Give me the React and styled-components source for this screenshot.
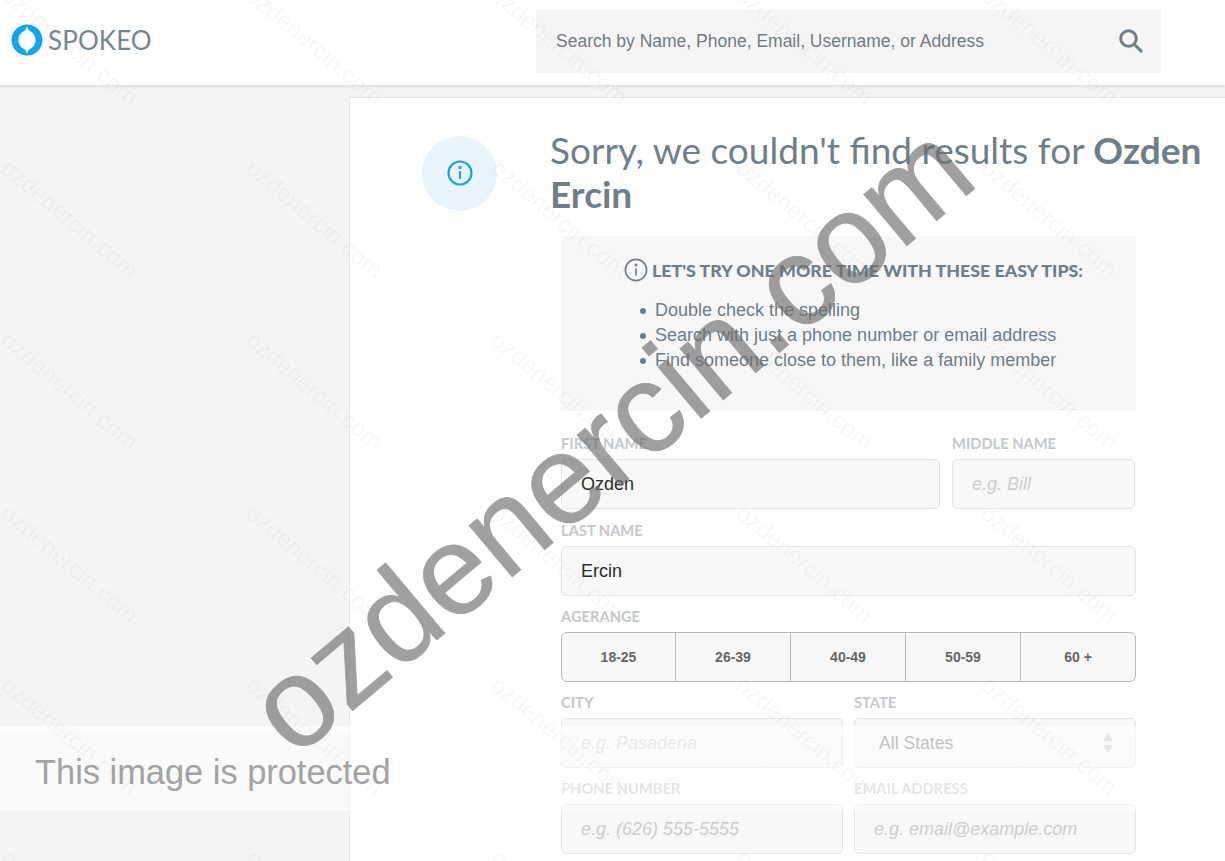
import React from 'react';
import styled, { createGlobalStyle } from 'styled-components';

const GlobalStyle = createGlobalStyle`
  html, body {
    margin: 0;
    padding: 0;
    height: 861px;
    overflow: hidden;
    background: #f4f4f4;
  }
  * { box-sizing: border-box; }
`;

const Shell = styled.div`
  position: relative;
  height: 861px;
  overflow: hidden;
  font-family: 'Liberation Sans', Arial, sans-serif;
`;

const Header = styled.header`
  display: grid;
  grid-template-columns: 536px 625px;
  align-items: start;
  height: 85px;
  padding-top: 10px;
  background: #fff;
  box-shadow: 0 1px 4px rgba(0, 0, 0, 0.12);
`;

const Logo = styled.div`
  display: flex;
  align-items: center;
  gap: 5px;
  height: 60px;
  padding-left: 11px;
`;

const LogoText = styled.span`
  font-family: Lato, sans-serif;
  font-size: 26px;
  letter-spacing: 0.1px;
  color: #76868f;
`;

const SearchBar = styled.div`
  display: flex;
  align-items: center;
  justify-content: space-between;
  height: 63px;
  padding: 0 18px 2px 20px;
  background: #f5f5f5;
`;

const SearchInput = styled.input`
  flex: 1;
  margin-top: 1px;
  border: 0;
  outline: 0;
  padding: 0;
  background: transparent;
  font: 17.5px 'Liberation Sans', Arial, sans-serif;
  &::placeholder { color: #6f7c84; opacity: 1; }
`;

const Body = styled.div`
  display: grid;
  grid-template-columns: 349px 1fr;
  padding-top: 12px;
`;

const Panel = styled.main`
  height: 780px;
  padding: 38px 0 0 72px;
  background: #fff;
  border-top: 1px solid #e6e6e6;
  border-left: 1px solid #e6e6e6;
`;

const Intro = styled.div`
  display: flex;
  gap: 53px;
`;

const InfoBadge = styled.div`
  display: flex;
  flex: none;
  align-items: center;
  justify-content: center;
  width: 75px;
  height: 75px;
  padding-bottom: 1px;
  border-radius: 50%;
  background: #e9f4fc;
`;

const Heading = styled.h1`
  width: 672px;
  margin: -8px 0 0;
  font-family: Lato, sans-serif;
  font-size: 37px;
  font-weight: 400;
  line-height: 43.5px;
  color: #6d7f8a;
  b { font-weight: 700; }
`;

const Column = styled.div`
  width: 575px;
  margin: 0 0 0 139px;
`;

const Tips = styled.section`
  height: 175px;
  margin-top: 21px;
  padding-top: 22px;
  background: #f7f7f7;
`;

const TipsTitle = styled.h2`
  display: flex;
  align-items: center;
  gap: 4px;
  height: 24px;
  margin: 0 0 0 63px;
  font-family: Lato, sans-serif;
  font-size: 17.8px;
  font-weight: 900;
  white-space: nowrap;
  color: #6d7f8a;
`;

const TipsList = styled.ul`
  margin: 16px 0 0;
  padding: 0 0 0 79px;
  list-style: none;
  font-size: 18px;
  line-height: 25px;
  color: #6c7d88;
`;

const TipItem = styled.li`
  display: flex;
  align-items: center;
  gap: 9px;
  &::before {
    content: '';
    flex: none;
    width: 6px;
    height: 6px;
    border-radius: 50%;
    background: #6c7d88;
  }
`;

const Form = styled.form`
  display: grid;
  row-gap: 12px;
  margin-top: 24px;
`;

const Row = styled.div`
  display: grid;
  grid-template-columns: ${(p) => p.$cols || '1fr'};
  column-gap: ${(p) => p.$gap || '11px'};
  &:first-child { margin-bottom: 1px; }
`;

const Field = styled.div`
  position: relative;
  min-width: 0;
`;

const Label = styled.label`
  display: block;
  height: 16px;
  margin-bottom: 8px;
  font-family: Lato, sans-serif;
  font-size: 14.7px;
  font-weight: 700;
  line-height: 16px;
  white-space: nowrap;
  color: #c4c8cb;
`;

const TextInput = styled.input`
  display: block;
  width: 100%;
  height: 50px;
  padding: 0 19px;
  border: 1px solid #e4e4e4;
  border-radius: 5px;
  outline: 0;
  background: #f8f8f8;
  font: 18px 'Liberation Sans', Arial, sans-serif;
  color: #2b2b2b;
  &::placeholder {
    font-style: italic;
    color: #cdcdcd;
    opacity: 1;
  }
`;

const StateSelect = styled.select`
  display: block;
  width: 100%;
  height: 50px;
  padding: 0 24px;
  border: 1px solid #e4e4e4;
  border-radius: 5px;
  outline: 0;
  appearance: none;
  background: #f8f8f8;
  font: 17.6px 'Liberation Sans', Arial, sans-serif;
  color: #777;
`;

const SelectArrows = styled.svg`
  position: absolute;
  right: 23px;
  bottom: 15px;
  pointer-events: none;
`;

const Segments = styled.div`
  display: grid;
  grid-template-columns: 114px 115px 115px 115px 1fr;
  height: 50px;
  border: 1px solid #b9b9b9;
  border-radius: 6px;
  overflow: hidden;
  background: #f8f8f8;
`;

const Segment = styled.button`
  padding: 0;
  border: 0;
  border-right: 1px solid #b9b9b9;
  background: transparent;
  font: bold 14px 'Liberation Sans', Arial, sans-serif;
  color: #666;
  &:last-child { border-right: 0; }
`;

const ProtectedBand = styled.div`
  position: absolute;
  left: 0;
  right: 0;
  top: 726px;
  height: 85px;
  padding: 25px 0 0 35px;
  background: linear-gradient(rgba(255,255,255,.75) 0 7px, rgba(255,255,255,.55) 7px);
  font-size: 34.4px;
  line-height: 42px;
  color: #a3a3a3;
`;

const TileLayer = styled.div`
  position: absolute;
  left: -1px;
  top: -40px;
  display: grid;
  grid-template-columns: repeat(5, 245px);
  grid-auto-rows: 172.5px;
  pointer-events: none;
`;

const Tile = styled.span`
  display: block;
  width: 245px;
  font-size: 24px;
  line-height: 172.5px;
  white-space: nowrap;
  text-align: center;
  color: rgba(120, 120, 120, 0.06);
  transform: translateX(-52px) rotate(40deg);
`;

const BigMark = styled.div`
  position: absolute;
  left: 610px;
  top: 438px;
  transform: translate(-50%, -50%) rotate(-40deg);
  font-size: 127px;
  line-height: 1;
  white-space: nowrap;
  color: #6e6e6e;
  -webkit-text-stroke: 0.8px #6e6e6e;
  opacity: 0.65;
  pointer-events: none;
`;

const LogoMark = () => (
  <svg width="32" height="32" viewBox="0 0 32 32">
    <circle cx="16" cy="16" r="15.5" fill="#12a5ea" />
    <path d="M16 2.5 L18 6.5 C21.8 8 24.5 11.5 24.5 16 C24.5 20.5 21.8 24 18 25.5 L16 29.5 L14 25.5 C10.2 24 7.5 20.5 7.5 16 C7.5 11.5 10.2 8 14 6.5 Z" fill="#fff" />
  </svg>
);

const SearchIcon = () => (
  <svg width="24" height="24" viewBox="0 0 24 24" fill="none" stroke="#6f7f89" strokeWidth="3" strokeLinecap="round">
    <circle cx="9.5" cy="9.5" r="7.8" />
    <path d="M15.5 15.5l6.6 6.6" />
  </svg>
);

const InfoIcon = ({ size, color, strokeWidth }) => (
  <svg width={size} height={size} viewBox="0 0 24 24" fill="none" stroke={color} strokeWidth={strokeWidth}>
    <circle cx="12" cy="12" r="10.6" />
    <path d="M12 10.4v7" />
    <circle cx="12" cy="7" r="0.6" fill={color} />
  </svg>
);

const watermarkTiles = Array.from({ length: 30 }, (_, i) => i);
const ageRanges = ['18-25', '26-39', '40-49', '50-59', '60 +'];

export default function App() {
  return (
    <Shell>
      <GlobalStyle />
      <Header>
        <Logo>
          <LogoMark />
          <LogoText>SPOKEO</LogoText>
        </Logo>
        <SearchBar>
          <SearchInput readOnly placeholder="Search by Name, Phone, Email, Username, or Address" />
          <SearchIcon />
        </SearchBar>
      </Header>
      <Body>
        <div />
        <Panel>
          <Intro>
            <InfoBadge>
              <InfoIcon size={26} color="#1ba6d8" strokeWidth={2} />
            </InfoBadge>
            <Heading>
              Sorry, we couldn't find results for <b>Ozden Ercin</b>
            </Heading>
          </Intro>
          <Column>
            <Tips>
              <TipsTitle>
                <InfoIcon size={24} color="#6d7f8a" strokeWidth={1.7} />
                LET'S TRY ONE MORE TIME WITH THESE EASY TIPS:
              </TipsTitle>
              <TipsList>
                <TipItem>Double check the spelling</TipItem>
                <TipItem>Search with just a phone number or email address</TipItem>
                <TipItem>Find someone close to them, like a family member</TipItem>
              </TipsList>
            </Tips>
            <Form>
              <Row $cols="379px 183px" $gap="12px">
                <Field>
                  <Label>FIRST NAME</Label>
                  <TextInput readOnly value="Ozden" />
                </Field>
                <Field>
                  <Label>MIDDLE NAME</Label>
                  <TextInput readOnly placeholder="e.g. Bill" />
                </Field>
              </Row>
              <Row>
                <Field>
                  <Label>LAST NAME</Label>
                  <TextInput readOnly value="Ercin" />
                </Field>
              </Row>
              <Row>
                <Field>
                  <Label>AGERANGE</Label>
                  <Segments>
                    {ageRanges.map((range) => (
                      <Segment type="button" key={range}>{range}</Segment>
                    ))}
                  </Segments>
                </Field>
              </Row>
              <Row $cols="282px 282px">
                <Field>
                  <Label>CITY</Label>
                  <TextInput readOnly placeholder="e.g. Pasadena" />
                </Field>
                <Field>
                  <Label>STATE</Label>
                  <StateSelect defaultValue="all">
                    <option value="all">All States</option>
                  </StateSelect>
                  <SelectArrows width="10" height="20" viewBox="0 0 10 20">
                    <path d="M5 0l5 8H0zM5 20l5-8H0z" fill="#c9c9c9" />
                  </SelectArrows>
                </Field>
              </Row>
              <Row $cols="282px 282px">
                <Field>
                  <Label>PHONE NUMBER</Label>
                  <TextInput readOnly placeholder="e.g. (626) 555-5555" />
                </Field>
                <Field>
                  <Label>EMAIL ADDRESS</Label>
                  <TextInput readOnly placeholder="e.g. email@example.com" />
                </Field>
              </Row>
            </Form>
          </Column>
        </Panel>
      </Body>
      <ProtectedBand>This image is protected</ProtectedBand>
      <TileLayer>
        {watermarkTiles.map((i) => (
          <Tile key={i}>ozdenercin.com</Tile>
        ))}
      </TileLayer>
      <BigMark>ozdenercin.com</BigMark>
    </Shell>
  );
}
